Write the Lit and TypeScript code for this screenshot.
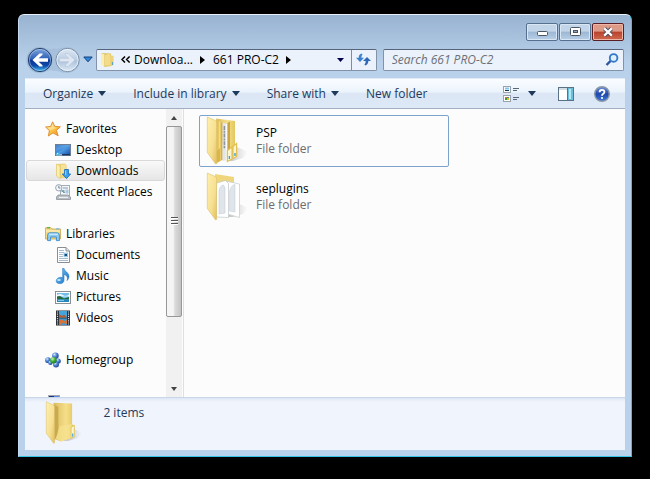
import { LitElement, html, css, svg, nothing, TemplateResult } from "lit";
import { customElement, property } from "lit/decorators.js";

const shared = css`
  * { box-sizing: border-box; }
  svg { display: block; flex: none; }
  button, input { font: inherit; color: inherit; margin: 0; }
  button { background: none; border: 0; padding: 0; cursor: default; }
  a { color: inherit; text-decoration: none; }
`;

/* Sixteen-pixel glyphs, all drawn on a 16 x 16 grid. */
const glyphs: Record<string, TemplateResult> = {
  favorites: svg`
    <defs><linearGradient id="g" x1="0" y1="0" x2="1" y2="1"><stop offset="0" stop-color="#ffe9a8"/><stop offset=".5" stop-color="#fdc648"/><stop offset="1" stop-color="#f08a1c"/></linearGradient></defs>
    <path d="M7.6 .8 L9.8 5.4 L15.4 5.8 L11.4 9.4 L13.2 14.8 L8 11.9 L3.4 15 L4.4 9.6 L.6 6 L5.6 5.4Z" fill="url(#g)" stroke="#d98a2c" stroke-width=".9" stroke-linejoin="round"/>
    <path d="M7.6 2.8 L8.8 6.2 L12 6.6 L8 8.6 L5 9 L2.6 6.8 L6.2 6.2Z" fill="#fff1c0" opacity=".5"/>`,
  desktop: svg`
    <defs><linearGradient id="g" x1="0" y1="0" x2="1" y2="1"><stop offset="0" stop-color="#1c58b4"/><stop offset=".5" stop-color="#4f9be4"/><stop offset="1" stop-color="#0f45a0"/></linearGradient></defs>
    <rect x=".5" y="2.5" width="15" height="11" fill="url(#g)" stroke="#6f7f93"/>
    <path d="M1 3H15L1 9Z" fill="#7cbcf0" opacity=".4"/>
    <rect x="1" y="12" width="14" height="1.5" fill="#9db7d2"/><rect x="7" y="12" width="8" height="1.5" fill="#1d3660"/>
    <circle cx="3" cy="12" r="1.6" fill="#41b5e8"/><circle cx="2.6" cy="11.6" r=".6" fill="#fff"/>`,
  downloads: svg`
    <path d="M1.5 1 L10 .6 L11.6 2 V14.6 L5 15.6 L1.5 13Z" fill="#ecd27c"/>
    <path d="M1.5 1 L5 2.8 V15.6 L1.5 13Z" fill="#fbeeb0" stroke="#d9bc5c" stroke-width=".5"/>
    <path d="M6 2 L10.8 1.4 V9 L6 12Z" fill="#f5e197"/>
    <path d="M9.6 6.5H13.4V11H15.6L11.5 15.6L7.4 11H9.6Z" fill="#3aa2ee" stroke="#1a6cc0" stroke-width=".9"/>
    <path d="M10.6 7.5V12" stroke="#9bd8ff"/>`,
  recent: svg`
    <rect x="5.5" y="1.5" width="9" height="10" fill="#f5f8fa" stroke="#a3adb5"/>
    <path d="M8 4H13M8 8.5H10" stroke="#8099ad"/><rect x="10.5" y="5.5" width="3" height="4" fill="#a7c8dd"/><rect x="6.5" y="6" width="3" height="2" fill="#7f9eb1"/>
    <path d="M3 11H13L15.5 13V15.5H1.5V13Z" fill="#b7bec3" stroke="#8a9298" stroke-width=".8"/>
    <path d="M4 13.4H13" stroke="#f6f6f6"/>
    <circle cx="3.8" cy="3.8" r="3.2" fill="#f4f8fb" stroke="#8d9ba8" stroke-width=".9"/><path d="M3.8 1.8V4H5.4" stroke="#53697c" stroke-width=".8" fill="none"/>`,
  libraries: svg`
    <path d="M.5 3.5V1.8H6L7 3H15.5V13H.5Z" fill="#f3d984" stroke="#c7a64b" stroke-width=".8"/>
    <path d="M1 5H15" stroke="#fff6c9"/><rect x="2" y="1" width="3" height="1.4" fill="#55b848"/><rect x="11" y="2.4" width="3.5" height="1" fill="#6cb5ea"/>
    <path d="M2.6 14.6V9.2Q2.6 6.8 5 6.8H12Q14.4 6.8 14.4 9.2V14.6H11.4V11H5.6V14.6Z" fill="#8ecbf3" stroke="#3b8bca" stroke-width=".9"/>
    <path d="M4 8.2H13" stroke="#dff3ff"/>`,
  documents: svg`
    <path d="M2.5 .5H11L14.5 4V15.5H2.5Z" fill="#fff" stroke="#8a8f94"/><path d="M11 .5V4H14.5" fill="#dfe4e8" stroke="#8a8f94"/>
    <path d="M4 3.5H9M4 5.5H9M4 7.5H8M4 9.5H8M4 11.5H13M4 13.5H13" stroke="#a9bccb"/><rect x="8.6" y="5.6" width="4.4" height="4.6" fill="#93c9e8"/><rect x="9.6" y="7" width="2.4" height="2" fill="#1b4d78"/>`,
  music: svg`
    <defs><linearGradient id="g" x1="0" y1="0" x2="1" y2="1"><stop offset="0" stop-color="#7fd0fa"/><stop offset="1" stop-color="#1268c2"/></linearGradient></defs>
    <path d="M7.6 .3H9C9.2 3.4 13.8 4.2 14 8.2 14 10 13.2 11.4 12 12.6 13 9.6 12.2 7.4 9 6.4V12.2C9 14.4 7.2 15.7 4.8 15.7 2.6 15.7 1.2 14.6 1.2 12.9 1.2 10.8 3.4 9.3 5.8 9.3 6.5 9.3 7.1 9.4 7.6 9.6Z" fill="url(#g)" stroke="#1f74be" stroke-width=".5"/>
    <ellipse cx="4" cy="12" rx="1.8" ry="1" fill="#bdeaff"/>`,
  pictures: svg`
    <rect x=".5" y="2.5" width="15" height="12" fill="#fff" stroke="#8b8f93"/><rect x="2" y="4" width="12" height="9" fill="#72bdea"/>
    <path d="M2 6Q5 4 8 6T14 5.4V7.6H2Z" fill="#e6f6ff"/><path d="M2 7.6L5 7 9 9.4 14 8V10.4H2Z" fill="#23683a"/><rect x="2" y="10.4" width="12" height="2.6" fill="#2486ba"/><path d="M3 11.4H9" stroke="#8bd0ef"/>`,
  videos: svg`
    <rect x="1" y=".5" width="14" height="15" fill="#262b30"/><rect x="4" y="1" width="8" height="6.6" fill="#44a5de"/><rect x="4" y="8.4" width="8" height="6.6" fill="#3f98d2"/>
    <path d="M4 7.6L4 4L7 6L9 4.6L12 7.6Z" fill="#b55b32"/><path d="M5 10Q8 8.6 9 11.4L12 9.6V14L8 13L5 15Z" fill="#d5733d"/>
    <path d="M2.5 1.4V15M13.5 1.4V15" stroke="#d6dde2" stroke-width="1.2" stroke-dasharray="1.2 1"/>`,
  homegroup: svg`
    <defs><radialGradient id="g" cx=".35" cy=".3" r=".75"><stop offset="0" stop-color="#d3e8ff"/><stop offset=".45" stop-color="#5486d6"/><stop offset="1" stop-color="#1b3f92"/></radialGradient>
    <radialGradient id="h" cx=".35" cy=".3" r=".75"><stop offset="0" stop-color="#c7f6b2"/><stop offset=".5" stop-color="#43b338"/><stop offset="1" stop-color="#17781d"/></radialGradient></defs>
    <circle cx="10.4" cy="3.8" r="3.3" fill="url(#g)"/><circle cx="3" cy="8.2" r="2.9" fill="url(#g)"/><circle cx="13.2" cy="9" r="2.6" fill="url(#g)"/><circle cx="11" cy="12.6" r="3" fill="url(#g)"/><circle cx="5.4" cy="10.8" r="2.2" fill="url(#g)"/><circle cx="8.4" cy="8.2" r="3.2" fill="url(#h)"/>`,
  computer: svg`
    <rect x="3.5" y="1.5" width="11" height="9" fill="#1b2f8f" stroke="#a2a8ae"/><rect x="9" y="2" width="5" height="5" fill="#5f8bd8"/><path d="M5 13H14" stroke="#777" stroke-width="2"/>`,
};

@customElement("small-icon")
export class SmallIcon extends LitElement {
  @property() name = "favorites";
  static styles = [shared, css`:host { display: block; flex: none; width: 16px; height: 16px; }`];
  render() {
    return html`<svg width="16" height="16" viewBox="0 0 16 16" aria-hidden="true">${glyphs[this.name]}</svg>`;
  }
}

/* Open folder seen from the side; "contents" picks what stands inside it. */
@customElement("folder-icon")
export class FolderIcon extends LitElement {
  @property() contents: "folders" | "papers" | "none" = "none";
  @property({ type: Number }) size = 52;
  static styles = [shared, css`:host { display: block; flex: none; } svg { overflow: visible; }`];

  private inside() {
    if (this.contents === "folders")
      return svg`
        <path d="M9 3.5 L28 6 V41 L20 44Z" fill="url(#back)"/>
        <path d="M9 4.5 L15.5 7.5 V45 L9 48Z" fill="#e3c25c"/><path d="M12.5 6.5 V45" stroke="#f3dd8c" stroke-width="1.4"/><path d="M15 8V45" stroke="#b9983c" stroke-width=".8"/>
        <path d="M15.5 7.5 L20.5 9 V45 L15.5 46Z" fill="#e3e6e9"/>
        <path d="M17.4 11V34" stroke="#8f959c" stroke-width="1.6" stroke-dasharray="4 .8 2 .8"/><path d="M19.4 9V45" stroke="#fbfbfb" stroke-width="1.2"/>
        <path d="M20.5 8 L23 6.5 V42 L20.5 45Z" fill="#c9a544"/>
        <path d="M8.5 38L13 33V46L9 48.5Z" fill="#d9b54a"/>
        <path d="M20.4 35.5L25 32V44L20.4 46.5Z" fill="#fdf5d2" stroke="#e2c050" stroke-width="1.2"/><path d="M26 31.5L29.6 28.5V41.5L26 43.5Z" fill="#fdf5d2" stroke="#e2c050" stroke-width="1.2"/>
        <path d="M22.4 41V44M28 38V41" stroke="#38a0e0" stroke-width="1.4"/>`;
    if (this.contents === "papers")
      return svg`
        <path d="M8 3 L27 6 V20 L9 30Z" fill="#efd67c"/>
        <path d="M18.5 10 L32.5 13 V46.5 L20 43Z" fill="#fff" stroke="#c5c9cc" stroke-width=".7"/>
        <path d="M22.5 20 Q24 14 28 13.4 V41 L22.5 40Z" fill="#dfe5ea" stroke="#c3ccd3" stroke-width=".5"/>
        <path d="M9.5 12 L18.5 9.5 L21.5 12.5 V46.5 L9.5 46Z" fill="#fff" stroke="#bfc5c8" stroke-width=".7"/>
        <path d="M12 20 Q13 14.5 16.5 14 L18 17 V42 L12 43Z" fill="#dfe5ea" stroke="#bcc5cc" stroke-width=".5"/>`;
    return svg`
        <path d="M8.5 3 L29.5 4 V27.5 L32 29 V42 L17 47 L9 44Z" fill="url(#back)"/>
        <path d="M9 5 L14 8 V38 L9 46Z" fill="#c9aa50"/>
        <path d="M15 30 L29 27 V43 L17 46.5 L11 44Z" fill="#f6e290" opacity=".7"/>
        <path d="M28.4 31 L32 28.5 V41.5 L28.4 43.5Z" fill="#fff6cc" stroke="#ddbd54" stroke-width=".9"/><path d="M30.2 38V41.5" stroke="#4aa8dd" stroke-width="1.4"/>`;
  }

  render() {
    return html`<svg width=${(this.size / 52) * 40} height=${this.size} viewBox="0 0 40 52" aria-hidden="true">
      <defs>
        <linearGradient id="front" x1="0" y1="0" x2="1" y2="1"><stop offset="0" stop-color="#fff0ae"/><stop offset=".6" stop-color="#f6df90"/><stop offset="1" stop-color="#e2bf5c"/></linearGradient>
        <linearGradient id="back" x1="0" y1="0" x2="1" y2="0"><stop offset="0" stop-color="#dcbc5c"/><stop offset=".6" stop-color="#f5df8b"/><stop offset="1" stop-color="#e4c65e"/></linearGradient>
        <linearGradient id="shade" x1="0" y1="0" x2="1" y2="0"><stop offset="0" stop-color="#777" stop-opacity=".5"/><stop offset="1" stop-color="#999" stop-opacity="0"/></linearGradient>
      </defs>
      <path d="M20 46 L30 32 L41 37 L36 43 L26 46Z" fill="url(#shade)"/>
      ${this.inside()}
      <path d="M.3 2 L8.4 5.6 Q9.6 6.4 9.6 8 V48.6 L8.6 49 L.3 37.5Z" fill="url(#front)" stroke="#dcc06a" stroke-width=".6"/>
    </svg>`;
  }
}

@customElement("window-header")
export class WindowHeader extends LitElement {
  static styles = [shared, css`
    :host { display: block; padding: 8px 7px 0; }
    .caption { display: flex; justify-content: flex-end; gap: 1px; height: 18px; }
    .caption button {
      display: flex; align-items: center; justify-content: center; width: 32px; height: 18px;
      border: 1px solid #56708f; border-radius: 2px; box-shadow: inset 0 0 0 1px #d9e7f5;
      background: linear-gradient(#c3d5e9 45%, #9db7d3 50%, #b9d0e8);
    }
    .caption .close { border-color: #5a1f24; box-shadow: inset 0 0 0 1px #eeb6a6; background: linear-gradient(#dd9a86 45%, #b9432c 50%, #cf6a4e); }
    .bar { display: flex; align-items: center; height: 37px; }
    .travel { display: flex; align-items: center; }
    .recent { width: 16px; height: 20px; display: flex; align-items: center; justify-content: center; }
    .box { display: flex; align-items: center; height: 22px; border: 1px solid #8293a9; border-top-color: #55647a; border-radius: 2px; background: #ebf2fb; }
    .address { flex: 287 1 0; min-width: 0; padding-left: 1px; }
    .address small-icon { margin: 0 6px 0 1px; }
    .crumb { display: flex; align-items: center; height: 20px; white-space: nowrap; }
    .double { width: 13px; }
    .arrow { width: 20px; height: 20px; display: flex; align-items: center; justify-content: center; }
    .space { flex: 1; }
    .refresh { width: 25px; height: 20px; border-left: 1px solid #7d8da3; display: flex; align-items: center; justify-content: center; }
    .search { flex: 235 1 0; min-width: 0; margin-left: 6px; padding: 0 4px 0 8px; }
    .search input { flex: 1; min-width: 0; padding: 0; border: 0; outline: 0; background: none; height: 20px; appearance: none; }
    .search input::placeholder { font-style: italic; color: #6b7076; opacity: 1; }
  `];

  private arrow() {
    return html`<svg width="5" height="8" viewBox="0 0 5 8" aria-hidden="true"><path d="M0 0L5 4L0 8Z" fill="#000"/></svg>`;
  }

  render() {
    return html`
      <div class="caption">
        <button aria-label="Minimize"><svg width="11" height="10" viewBox="0 0 11 10"><rect x=".5" y="4.5" width="10" height="4" rx="1" fill="#fff" stroke="#4c5662"/></svg></button>
        <button aria-label="Maximize"><svg width="11" height="10" viewBox="0 0 11 10"><rect x=".5" y=".5" width="10" height="8" rx="1" fill="#fff" stroke="#4c5662"/><rect x="3.5" y="3.5" width="4" height="2" fill="#8ea6c4" stroke="#4c5662"/></svg></button>
        <button class="close" aria-label="Close"><svg width="12" height="10" viewBox="0 0 12 10"><path d="M2.5 1.5L9.5 8.5M9.5 1.5L2.5 8.5" stroke="#4b4e5c" stroke-width="4.2"/><path d="M2.2 1.4L9.8 8.6M9.8 1.4L2.2 8.6" stroke="#fff" stroke-width="2.2"/></svg></button>
      </div>
      <div class="bar">
        <div class="travel">
          <button aria-label="Back">
            <svg width="28" height="28" viewBox="0 0 28 28">
              <defs><linearGradient id="b" x1="0" y1="0" x2="0" y2="1"><stop offset="0" stop-color="#7fa5dc"/><stop offset=".47" stop-color="#2b5db4"/><stop offset=".5" stop-color="#0b3390"/><stop offset=".75" stop-color="#0d4bac"/><stop offset="1" stop-color="#4cc6f4"/></linearGradient></defs>
              <path d="M14 1Q22 4 28 2.4V25Q24 23 14 27Z" fill="#9fb9d6" opacity=".6"/>
              <circle cx="13.5" cy="14" r="13" fill="#8aa5c7" opacity=".55"/><circle cx="14" cy="14" r="11.6" fill="url(#b)" stroke="#243f70"/><circle cx="14" cy="14" r="10.6" fill="none" stroke="#b7d6f3" opacity=".55"/>
              <path d="M6.5 14L13.5 7.5H16.5V8.8L12.6 12.3H22V15.7H12.6L16.5 19.2V20.5H13.5Z" fill="#fff"/>
            </svg>
          </button>
          <button aria-label="Forward" disabled>
            <svg width="26" height="28" viewBox="0 0 26 28">
              <defs><linearGradient id="f" x1="0" y1="0" x2="0" y2="1"><stop offset="0" stop-color="#dce7f4"/><stop offset=".48" stop-color="#bccfe5"/><stop offset=".5" stop-color="#a9c0da"/><stop offset="1" stop-color="#dce9f6"/></linearGradient></defs>
              <path d="M0 2.4Q4 3 7 2L13 1A13 13 0 0 1 13 27Q7 27 3 25Q2 24.5 0 25Z" fill="#9fb9d6" opacity=".6"/>
              <circle cx="13.5" cy="14" r="11.6" fill="url(#f)" stroke="#788ca5"/><circle cx="13.5" cy="14" r="10.6" fill="none" stroke="#eff6fd" opacity=".8"/>
              <path d="M21 14L14 7.5H11.5V9L14.9 12.3H5.5V15.7H14.9L11.5 19V20.5H14Z" fill="#dfe8f2" stroke="#b3c3d5" stroke-width=".6"/>
            </svg>
          </button>
          <button class="recent" aria-label="Recent pages"><svg width="10" height="7" viewBox="0 0 10 7"><path d="M.8 1H9.2L5 5.8Z" fill="#2b8be0" stroke="#173f7c"/></svg></button>
        </div>
        <div class="box address">
          <small-icon name="crumbfolder"></small-icon>
          <button class="crumb double" aria-label="Earlier folders"><svg width="10" height="7" viewBox="0 0 10 7"><path d="M4 .5L1 3.5L4 6.5M8.6 .5L5.6 3.5L8.6 6.5" fill="none" stroke="#000" stroke-width="1.5"/></svg></button>
          <button class="crumb">Downloa...</button>
          <button class="arrow" aria-label="Subfolders of Downloads">${this.arrow()}</button>
          <button class="crumb">661 PRO-C2</button>
          <button class="arrow" aria-label="Subfolders of 661 PRO-C2">${this.arrow()}</button>
          <span class="space"></span>
          <button class="arrow" aria-label="Previous locations"><svg width="7" height="4" viewBox="0 0 7 4"><path d="M0 0H7L3.5 4Z" fill="#00004c"/></svg></button>
          <button class="refresh" aria-label="Refresh"><svg width="15" height="13" viewBox="0 0 15 13"><path d="M4 9L0 4.8H2.8Q2.6 1.4 5.4 .4L6.6 1.4Q5.2 2.4 5.4 4.8H8Z" fill="#3b82cc"/><path d="M11 4L15 8H12.3Q12.4 11.4 9.4 12.6L8.4 11.4Q9.9 10.4 9.7 8H7Z" fill="#2e68b8"/></svg></button>
        </div>
        <label class="box search">
          <input type="search" placeholder="Search 661 PRO-C2" aria-label="Search 661 PRO-C2">
          <svg width="14" height="13" viewBox="0 0 14 13" aria-hidden="true"><path d="M1.5 12L6 7.5" stroke="#2b55a5" stroke-width="2.4"/><circle cx="8.6" cy="4.9" r="3.8" fill="#dff0fd" stroke="#3578cb" stroke-width="1.9"/></svg>
        </label>
      </div>`;
  }
}

glyphs.crumbfolder = svg`
  <path d="M2 1L12 1.6V14L5 15Z" fill="#dfc268"/><path d="M2 1L5.4 2.6V15.2L2 12Z" fill="#fbeeae"/><path d="M6 3L11 1.6V13.6H6Z" fill="#f3dc87"/>
  <path d="M11 3L14.6 4V13L11 14.4Z" fill="#ecd27a"/><path d="M13.4 10V13" stroke="#4a9fd8"/>`;

@customElement("command-bar")
export class CommandBar extends LitElement {
  static styles = [shared, css`
    :host {
      display: flex; align-items: center; height: 31px; padding: 0 15px 0 18px; color: #1e395b;
      background: linear-gradient(#fbfdff, #eaf3fc 45%, #dce6f4 50%, #dde9f7); border-top: 1px solid #dfeaf6; border-bottom: 1px solid #a0afc3;
    }
    .menu { display: flex; align-items: center; gap: 5px; margin-right: 27px; white-space: nowrap; }
    .tools { display: flex; align-items: center; margin-left: auto; }
    .views { display: flex; align-items: center; gap: 9px; margin-right: 22px; }
    .preview { margin-right: 20px; }
  `];

  private caret() {
    return html`<svg width="8" height="5" viewBox="0 0 8 5" aria-hidden="true"><path d="M0 0H8L4 5Z" fill="#1e395b"/></svg>`;
  }

  render() {
    const menus: [string, boolean][] = [["Organize", true], ["Include in library", true], ["Share with", true], ["New folder", false]];
    return html`
      ${menus.map(([text, drop]) => html`<button class="menu">${text}${drop ? this.caret() : nothing}</button>`)}
      <div class="tools">
        <button class="views" aria-label="Change your view">
          <svg width="16" height="16" viewBox="0 0 16 16"><rect x=".5" y=".5" width="7" height="6" fill="#fff" stroke="#98a3ae"/><rect x=".5" y="9.5" width="7" height="6" fill="#fff" stroke="#98a3ae"/><path d="M2 2.5H6" stroke="#7fc4ee" stroke-width="2"/><path d="M2 4.5H6" stroke="#123a66"/><path d="M2 11.5H4" stroke="#e06a2c"/><path d="M4 11.5H6" stroke="#3a7ed0"/><path d="M2 13H4" stroke="#3b9c3c" stroke-width="2"/><path d="M4 13H6" stroke="#e8b422" stroke-width="2"/><path d="M10 2.5H16M10 4.5H14M10 11.5H16M10 13.5H14" stroke="#56677c"/></svg>
          ${this.caret()}
        </button>
        <button class="preview" aria-label="Show the preview pane">
          <svg width="16" height="14" viewBox="0 0 16 14"><rect x=".5" y=".5" width="15" height="13" fill="#fff" stroke="#5b7186"/><path d="M1 2H15" stroke="#a5bacb"/><rect x="10" y="1" width="5" height="12" fill="#69bfdc"/><rect x="11" y="2" width="2" height="10" fill="#b5e6f3"/><path d="M9.5 1V13" stroke="#5b7186"/></svg>
        </button>
        <button aria-label="Get help">
          <svg width="16" height="16" viewBox="0 0 16 16"><defs><linearGradient id="q" x1="0" y1="0" x2="0" y2="1"><stop offset="0" stop-color="#6f93dd"/><stop offset=".5" stop-color="#1f48a8"/><stop offset="1" stop-color="#3f7bd8"/></linearGradient></defs><circle cx="8" cy="8" r="7.3" fill="url(#q)" stroke="#8b97a8" stroke-width="1.4"/><path d="M5.6 6.2Q5.6 3.8 8 3.8T10.4 6Q10.4 7.2 9 8Q8 8.6 8 9.8" fill="none" stroke="#fff" stroke-width="1.8"/><circle cx="8" cy="12" r="1.1" fill="#fff"/></svg>
        </button>
      </div>`;
  }
}

interface Place { text: string; icon: string; iconOnly?: boolean; children?: Place[]; }

const places: Place[] = [
  { text: "Favorites", icon: "favorites", children: [
    { text: "Desktop", icon: "desktop" }, { text: "Downloads", icon: "downloads" }, { text: "Recent Places", icon: "recent" }] },
  { text: "Libraries", icon: "libraries", children: [
    { text: "Documents", icon: "documents" }, { text: "Music", icon: "music" }, { text: "Pictures", icon: "pictures" }, { text: "Videos", icon: "videos" }] },
  { text: "Homegroup", icon: "homegroup" },
  { text: "Computer", icon: "computer", iconOnly: true },
];

@customElement("navigation-pane")
export class NavigationPane extends LitElement {
  @property() selected = "Downloads";
  static styles = [shared, css`
    :host { display: flex; width: 159px; flex: none; min-height: 0; border-right: 1px solid #d5e1f2; }
    nav { flex: 1; min-width: 0; overflow: hidden; padding: 9px 1px 0; }
    .group { margin-bottom: 21px; }
    .place { display: flex; align-items: center; gap: 5px; height: 21px; padding-left: 18px; border: 1px solid transparent; border-radius: 3px; white-space: nowrap; }
    .child { padding-left: 28px; }
    .selected { border-color: #d9d9d9; background: linear-gradient(#f9f9f9, #e6e6e6); }
    .scroll { display: flex; flex-direction: column; width: 17px; background: #f1f1f1; border-right: 1px solid #fcfcfc; }
    .step { height: 17px; display: flex; align-items: center; justify-content: center; }
    .track { flex: 1; min-height: 0; }
    .thumb {
      display: flex; align-items: center; justify-content: center; height: 75%; border: 1px solid #979797; border-radius: 2px;
      background: linear-gradient(90deg, #f5f5f5 45%, #dcdcdc 55%, #c3c3c6);
    }
  `];

  private place(p: Place, child = false) {
    const on = p.text === this.selected;
    return html`<a href="#" class="place ${child ? "child" : ""} ${on ? "selected" : ""}" aria-label=${p.text} aria-current=${on ? "page" : nothing}><small-icon name=${p.icon}></small-icon>${p.iconOnly ? nothing : p.text}</a>`;
  }

  render() {
    return html`
      <nav aria-label="Places">
        ${places.map((p) => html`<div class="group">${this.place(p)}${p.children?.map((c) => this.place(c, true))}</div>`)}
      </nav>
      <div class="scroll">
        <button class="step" aria-label="Scroll up"><svg width="6" height="4" viewBox="0 0 6 4"><path d="M0 4H6L3 0Z" fill="#444"/></svg></button>
        <div class="track"><div class="thumb"><svg width="7" height="8" viewBox="0 0 7 8"><path d="M0 .5H7M0 3.5H7M0 6.5H7" stroke="#555"/><path d="M0 1.5H7M0 4.5H7M0 7.5H7" stroke="#fff"/></svg></div></div>
        <button class="step" aria-label="Scroll down"><svg width="6" height="4" viewBox="0 0 6 4"><path d="M0 0H6L3 4Z" fill="#444"/></svg></button>
      </div>`;
  }
}

@customElement("file-list")
export class FileList extends LitElement {
  static styles = [shared, css`
    :host { display: block; flex: 1; min-width: 0; padding: 6px 15px; overflow: hidden; }
    ul { list-style: none; margin: 0; padding: 0; display: grid; grid-template-columns: 250px; gap: 4px; }
    .item { display: flex; align-items: center; width: 100%; height: 52px; padding-left: 7px; gap: 9px; border: 1px solid transparent; border-radius: 2px; text-align: left; line-height: 16px; }
    .focused { border-color: #7da2ce; }
    .name, .kind { display: block; }
    .kind { color: #6d6d6d; }
  `];
  render() {
    const items = [
      { name: "PSP", contents: "folders", focused: true },
      { name: "seplugins", contents: "papers", focused: false },
    ];
    return html`<ul>${items.map((i) => html`
      <li><button class="item ${i.focused ? "focused" : ""}">
        <folder-icon contents=${i.contents}></folder-icon>
        <span><span class="name">${i.name}</span><span class="kind">File folder</span></span>
      </button></li>`)}</ul>`;
  }
}

@customElement("app-root")
export class AppRoot extends LitElement {
  static styles = [shared, css`
    :host { display: flex; box-sizing: border-box; height: 100vh; padding: 14px 18px 22px; background: #000; font: 12px/16px "Open Sans", "Noto Sans", sans-serif; color: #000; }
    .window {
      flex: 1; min-width: 0; display: flex; flex-direction: column; border: 1px solid #36c3e6; border-top-color: #e8f0f8; border-left-color: #c3d9ef;
      border-radius: 6px 6px 0 0; background: linear-gradient(#98b3d1, #b9d1ea 48px);
    }
    .client { flex: 1; min-height: 0; display: flex; flex-direction: column; margin: 0 6px 6px; background: #fcfcfc; }
    .body { flex: 1; min-height: 0; display: flex; }
    .details { display: flex; align-items: flex-start; gap: 22px; height: 53px; padding: 2px 0 0 21px; border-top: 1px solid #c9d6e8; background: linear-gradient(#dde7f5, #f0f4fc 4px); color: #1e395b; }
    .count { padding-top: 5px; }
  `];
  render() {
    return html`
      <main class="window">
        <window-header></window-header>
        <div class="client">
          <command-bar></command-bar>
          <div class="body"><navigation-pane></navigation-pane><file-list></file-list></div>
          <footer class="details"><folder-icon size="46"></folder-icon><span class="count">2 items</span></footer>
        </div>
      </main>`;
  }
}
